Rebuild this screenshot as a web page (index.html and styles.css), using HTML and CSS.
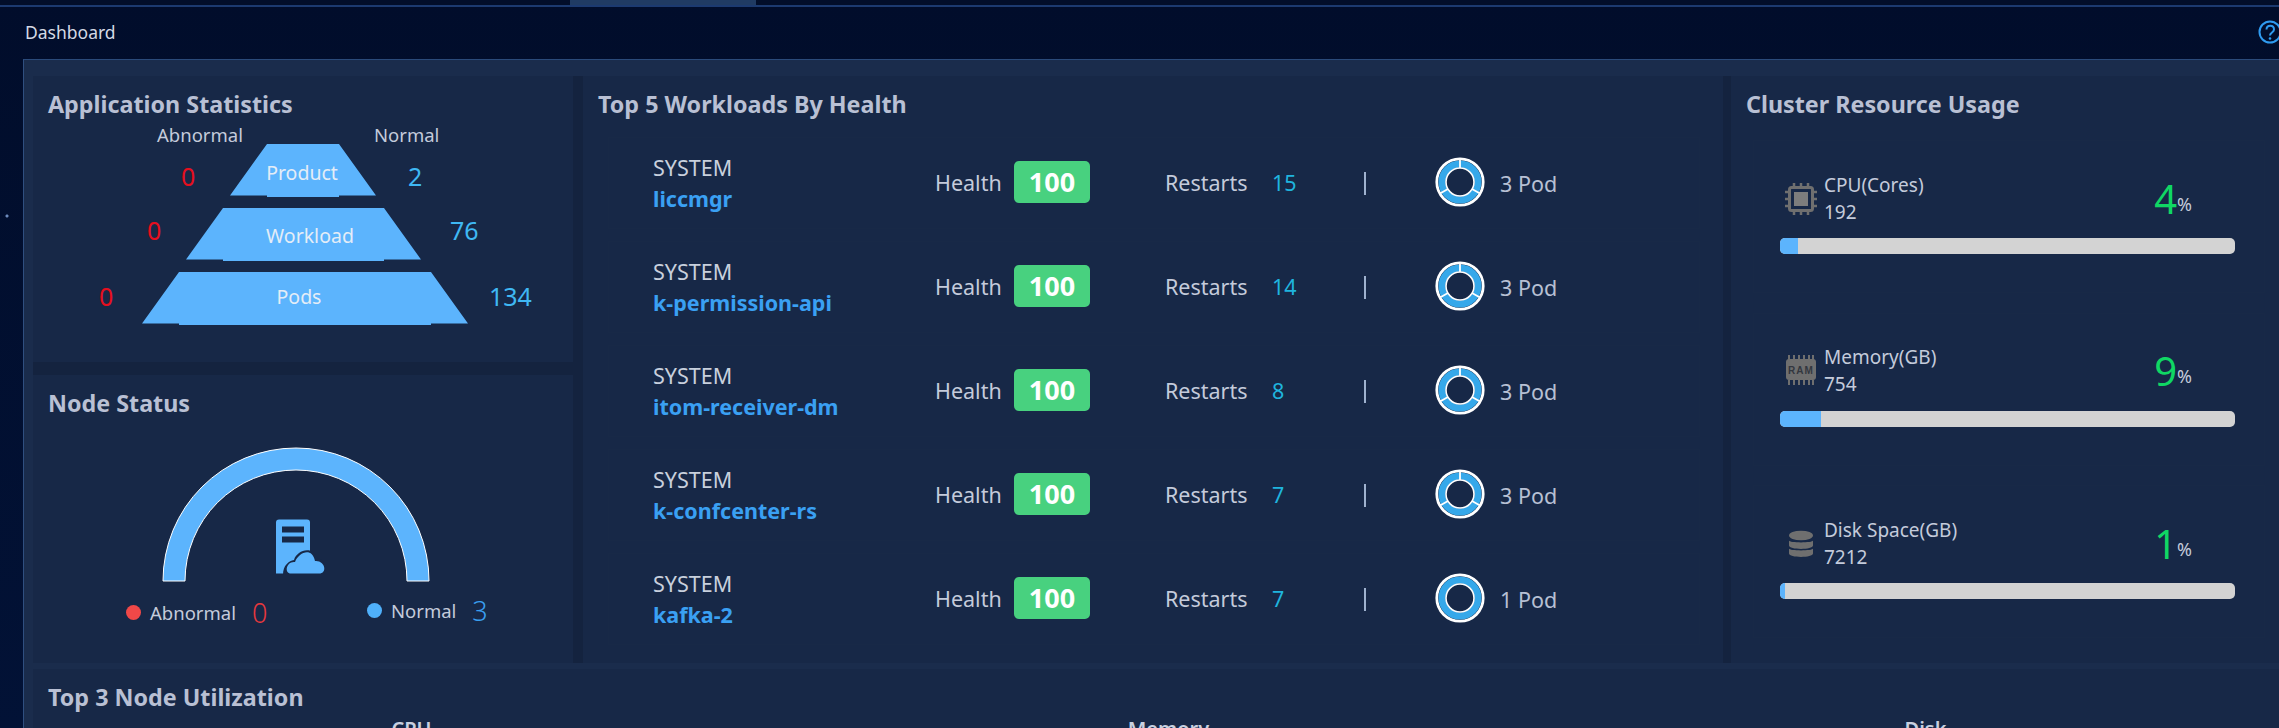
FILE: index.html
```html
<!DOCTYPE html>
<html lang="en">
<head>
    <meta charset="UTF-8">
    <title>Dashboard</title>
    <link rel="stylesheet" href="styles.css">
</head>
<body>
    <svg class="defs" width="0" height="0">
        <symbol id="pod-ring" viewBox="0 0 50 50">
            <circle cx="25" cy="25" r="23.2" fill="none" stroke="#fff" stroke-width="2.8"/>
            <circle cx="25" cy="25" r="18" fill="none" stroke="#35a8ea" stroke-width="7"/>
            <circle cx="25" cy="25" r="14" fill="none" stroke="#fff" stroke-width="1.6"/>
        </symbol>
        <symbol id="pod-ring-3" viewBox="0 0 50 50">
            <use href="#pod-ring" width="50" height="50"/>
            <path d="M25 2V11M5 36.500L13 32M45 36.500L37 32" stroke="#fff" stroke-width="1.800" fill="none"/>
        </symbol>
    </svg>

    <div class="topbar"><div class="topbar-tab"></div></div>
    <div class="page-head">
        <span class="page-title">Dashboard</span>
        <svg class="help-icon" width="24" height="24" viewBox="0 0 24 24">
            <circle cx="12" cy="12" r="10.500" fill="none" stroke="#2f9bf0" stroke-width="2"/>
            <path d="M8.500 9.500C8.500 4.500 16 4.500 16 9.500C16 12.500 12 12.500 12 15.500" fill="none" stroke="#2f9bf0" stroke-width="2"/>
            <circle cx="12" cy="18.500" r="1.300" fill="#2f9bf0"/>
        </svg>
    </div>

    <div class="main">
        <div class="upper">
            <div class="left-col">
                <section class="card card-app">
                    <h2 class="card-title">Application Statistics</h2>
                    <div class="pyr-labels"><span>Abnormal</span><span>Normal</span></div>
                    <div class="pyr-row pyr-product">
                        <span class="num-bad">0</span>
                        <div class="trap">Product</div>
                        <span class="num-ok">2</span>
                    </div>
                    <div class="pyr-row pyr-workload">
                        <span class="num-bad">0</span>
                        <div class="trap">Workload</div>
                        <span class="num-ok">76</span>
                    </div>
                    <div class="pyr-row pyr-pods">
                        <span class="num-bad">0</span>
                        <div class="trap">Pods</div>
                        <span class="num-ok">134</span>
                    </div>
                </section>

                <section class="card card-node">
                    <h2 class="card-title">Node Status</h2>
                    <div class="gauge">
                        <svg width="268" height="135" viewBox="0 0 268 135">
                            <path d="M1 134A133 133 0 0 1 267 134L245 134A111 111 0 0 0 23 134Z" fill="#5cb4fd" stroke="#fff" stroke-width="1"/>
                            <path d="M114 75.500a3 3 0 0 1 3-3H145a3 3 0 0 1 3 3V126.500H114Z" fill="#5cb4fd"/>
                            <path d="M120 79.500H142V85.500H120ZM120 89.500H142V95.500H120Z" fill="#172847"/>
                            <path d="M121 128C121 118 127 114 132 113C135 103 151 98 156 112C164 110 165 128 156 128Z" fill="#172847"/>
                            <path d="M129 126.500C122 126.500 124 114 133 115C137 105 150 100 153 114C163 113 166 126.500 157 126.500Z" fill="#5cb4fd"/>
                        </svg>
                    </div>
                    <div class="node-legend">
                        <div class="legend-item legend-bad">
                            <i class="dot dot-red"></i><span>Abnormal</span><b class="legend-num">0</b>
                        </div>
                        <div class="legend-item legend-ok">
                            <i class="dot dot-blue"></i><span>Normal</span><b class="legend-num">3</b>
                        </div>
                    </div>
                </section>
            </div>

            <section class="card card-workloads">
                <h2 class="card-title">Top 5 Workloads By Health</h2>
                <div class="wl-list">
                    <div class="wl-row">
                        <div class="wl-name"><span>SYSTEM</span><a>liccmgr</a></div>
                        <span class="wl-label">Health</span><span class="badge">100</span>
                        <span class="wl-restarts">Restarts</span><span class="wl-count">15</span>
                        <span class="wl-sep"></span>
                        <svg class="pod-icon" width="50" height="50"><use href="#pod-ring-3"/></svg>
                        <span class="wl-pods">3 Pod</span>
                    </div>
                    <div class="wl-row">
                        <div class="wl-name"><span>SYSTEM</span><a>k-permission-api</a></div>
                        <span class="wl-label">Health</span><span class="badge">100</span>
                        <span class="wl-restarts">Restarts</span><span class="wl-count">14</span>
                        <span class="wl-sep"></span>
                        <svg class="pod-icon" width="50" height="50"><use href="#pod-ring-3"/></svg>
                        <span class="wl-pods">3 Pod</span>
                    </div>
                    <div class="wl-row">
                        <div class="wl-name"><span>SYSTEM</span><a>itom-receiver-dm</a></div>
                        <span class="wl-label">Health</span><span class="badge">100</span>
                        <span class="wl-restarts">Restarts</span><span class="wl-count">8</span>
                        <span class="wl-sep"></span>
                        <svg class="pod-icon" width="50" height="50"><use href="#pod-ring-3"/></svg>
                        <span class="wl-pods">3 Pod</span>
                    </div>
                    <div class="wl-row">
                        <div class="wl-name"><span>SYSTEM</span><a>k-confcenter-rs</a></div>
                        <span class="wl-label">Health</span><span class="badge">100</span>
                        <span class="wl-restarts">Restarts</span><span class="wl-count">7</span>
                        <span class="wl-sep"></span>
                        <svg class="pod-icon" width="50" height="50"><use href="#pod-ring-3"/></svg>
                        <span class="wl-pods">3 Pod</span>
                    </div>
                    <div class="wl-row">
                        <div class="wl-name"><span>SYSTEM</span><a>kafka-2</a></div>
                        <span class="wl-label">Health</span><span class="badge">100</span>
                        <span class="wl-restarts">Restarts</span><span class="wl-count">7</span>
                        <span class="wl-sep"></span>
                        <svg class="pod-icon" width="50" height="50"><use href="#pod-ring"/></svg>
                        <span class="wl-pods">1 Pod</span>
                    </div>
                </div>
            </section>

            <section class="card card-usage">
                <h2 class="card-title">Cluster Resource Usage</h2>
                <div class="res-block">
                    <div class="res-head">
                        <svg class="res-icon" width="32" height="32" viewBox="0 0 32 32">
                            <rect x="4.500" y="4.500" width="23" height="23" rx="2" fill="none" stroke="#6f6f6f" stroke-width="3"/>
                            <rect x="9" y="9" width="14" height="14" fill="#7d7d7d"/>
                            <path d="M9 0V3M16 0V3M23 0V3M9 29V32M16 29V32M23 29V32M0 9H3M0 16H3M0 23H3M29 9H32M29 16H32M29 23H32" stroke="#6f6f6f" stroke-width="2.500"/>
                        </svg>
                        <div class="res-text"><span>CPU(Cores)</span><span>192</span></div>
                        <div class="res-pct"><b>4</b>%</div>
                    </div>
                    <div class="bar"><div class="bar-fill" style="width: 4%"></div></div>
                </div>
                <div class="res-block">
                    <div class="res-head">
                        <svg class="res-icon" width="32" height="32" viewBox="0 0 32 32">
                            <path d="M4 0V5M9 0V5M14 0V5M19 0V5M24 0V5M28 0V5M4 25V30M9 25V30M14 25V30M19 25V30M24 25V30M28 25V30" stroke="#6f6f6f" stroke-width="2"/>
                            <rect x="1" y="4" width="30" height="21" rx="3" fill="#6f6f6f"/>
                            <text x="16" y="19" class="ram-text">RAM</text>
                        </svg>
                        <div class="res-text"><span>Memory(GB)</span><span>754</span></div>
                        <div class="res-pct"><b>9</b>%</div>
                    </div>
                    <div class="bar"><div class="bar-fill" style="width: 9%"></div></div>
                </div>
                <div class="res-block">
                    <div class="res-head">
                        <svg class="res-icon" width="32" height="32" viewBox="0 0 32 32">
                            <path d="M4 20.500C4 23 28 23 28 20.500V25.500C28 30 4 30 4 25.500Z" fill="#6f6f6f"/>
                            <path d="M4 12.500C4 15 28 15 28 12.500V17.500C28 22 4 22 4 17.500Z" fill="#6f6f6f"/>
                            <ellipse cx="16" cy="7.500" rx="12" ry="4.800" fill="#6f6f6f"/>
                        </svg>
                        <div class="res-text"><span>Disk Space(GB)</span><span>7212</span></div>
                        <div class="res-pct"><b>1</b>%</div>
                    </div>
                    <div class="bar"><div class="bar-fill" style="width: 1%"></div></div>
                </div>
            </section>
        </div>

        <section class="card card-util">
            <h2 class="card-title">Top 3 Node Utilization</h2>
            <div class="util-cols">
                <span>CPU</span>
                <span>Memory</span>
                <span>Disk</span>
            </div>
        </section>
    </div>
</body>
</html>
```

FILE: styles.css
```css
html, body {
    margin: 0;
    padding: 0;
    height: 728px;
    overflow: hidden;
}
body {
    font-family: "Noto Sans", "Open Sans", sans-serif;
    color: #c4cbdb;
    background-color: #021031;
    background-image:
        radial-gradient(circle at 7px 216px, #6d8bbd 1px, transparent 2px),
        linear-gradient(180deg, #010d2b, #021236);
}
.defs {
    display: block;
    height: 0;
}
.topbar {
    height: 5px;
    background: #020e2a;
    border-bottom: 2px solid #1c3a70;
}
.topbar-tab {
    width: 186px;
    height: 5px;
    margin-left: 570px;
    background: #203b63;
}
.page-head {
    display: flex;
    align-items: center;
    justify-content: space-between;
    height: 52px;
    padding-left: 25px;
    padding-right: 0;
    margin-right: -3px;
}
.page-title {
    font-size: 17.500px;
    color: #d4d9e4;
    position: relative;
    top: -1px;
}
.help-icon {
    flex: none;
    position: relative;
    top: -1px;
}

.main {
    width: 2281px;
    margin-left: 23px;
    padding: 16px 0 0 10px;
    background: #1a2c4c;
    border-top: 1px solid #2a4a7a;
    border-left: 1px solid #2f4f80;
    box-sizing: border-box;
    height: 669px;
    margin-top: 0;
}
.upper {
    display: flex;
    height: 587px;
    margin-left: -1px;
    background: #14233f;
}
.left-col {
    display: flex;
    flex-direction: column;
    gap: 13px;
    width: 540px;
    flex: none;
}
.card {
    background: #172847;
    box-sizing: border-box;
}
.card-title {
    margin: 0;
    padding: 14px 0 0 15px;
    font-size: 23.300px;
    line-height: 28px;
    font-weight: 700;
    color: #b9c0d4;
}

/* Application Statistics */
.card-app {
    height: 286px;
}
.pyr-labels {
    display: flex;
    height: 18px;
    margin: 8px 0 1px 124px;
    font-size: 18.500px;
    line-height: 18px;
}
.pyr-labels span:first-child {
    width: 217px;
}
.pyr-row {
    display: flex;
    align-items: flex-start;
    height: 53px;
    margin-top: 11px;
}
.pyr-product {
    margin-top: -1px;
    padding-left: 148px;
}
.pyr-workload {
    padding-left: 114px;
}
.pyr-pods {
    padding-left: 66px;
}
.num-bad, .num-ok {
    font-size: 25px;
    line-height: 30px;
}
.num-bad {
    color: #e60f1e;
}
.num-ok {
    color: #3fb8f4;
}
.trap {
    box-sizing: border-box;
    height: 53px;
    background: #5cb4fd;
    color: #e4edf7;
    font-size: 19.500px;
    line-height: 24px;
    text-align: center;
    clip-path: polygon(37px 0, calc(100% - 37px) 0, 100% 51.500px, calc(100% - 37px) 51.500px, calc(100% - 37px) 53px, 37px 53px, 37px 51.500px, 0 51.500px);
}
.pyr-product .num-bad { width: 49px; margin-top: 17px; }
.pyr-product .num-ok { margin: 17px 0 0 32px; }
.pyr-product .trap { width: 146px; padding: 17px 2px 0 0; }
.pyr-workload .num-bad { width: 39px; margin-top: 7px; }
.pyr-workload .num-ok { margin: 7px 0 0 29px; }
.pyr-workload .trap { width: 235px; padding: 16px 0 0 13px; }
.pyr-pods .num-bad { width: 43px; margin-top: 9px; }
.pyr-pods .num-ok { margin: 9px 0 0 21px; }
.pyr-pods .trap { width: 326px; padding: 13px 12px 0 0; }

/* Node Status */
.card-node {
    height: 288px;
}
.gauge {
    height: 135px;
    margin: 30px 0 0 129px;
}
.node-legend {
    display: flex;
    margin-top: 15px;
    padding-left: 93px;
}
.legend-item {
    display: flex;
    align-items: center;
    font-size: 18.500px;
    height: 30px;
}
.legend-bad {
    width: 241px;
}
.legend-ok {
    margin-top: -2px;
}
.dot {
    width: 15px;
    height: 15px;
    border-radius: 50%;
    margin-right: 9px;
}
.dot-red { background: #f04848; }
.dot-blue { background: #4fb0fa; }
.legend-num {
    font-size: 27px;
    font-weight: 300;
    margin-left: 16px;
}
.legend-bad .legend-num { color: #e8383d; }
.legend-ok .legend-num { color: #3a9ff0; }

/* Top 5 Workloads */
.card-workloads {
    width: 1140px;
    flex: none;
    margin-left: 10px;
    padding-left: 0;
}
.wl-list {
    margin: 19px 0 0 25px;
}
.wl-row {
    display: flex;
    align-items: center;
    box-sizing: border-box;
    width: 1092px;
    height: 92px;
    margin-bottom: 12px;
    padding-left: 44px;
    border: 1px solid #182947;
    font-size: 21.500px;
}
.wl-name {
    display: flex;
    flex-direction: column;
    width: 282px;
    line-height: 31px;
    color: #c8d0dd;
    margin-top: -1px;
}
.wl-name a {
    color: #3aa0f3;
    font-weight: 700;
}
.wl-label {
    width: 79px;
    margin-top: -2px;
}
.badge {
    box-sizing: border-box;
    width: 76px;
    height: 42px;
    margin-top: -3px;
    border-radius: 5px;
    background: #48d17f;
    color: #fff;
    font-size: 27px;
    line-height: 41px;
    font-weight: 700;
    text-align: center;
}
.wl-restarts {
    width: 107px;
    margin: -2px 0 0 75px;
}
.wl-count {
    width: 92px;
    margin-top: -2px;
    color: #1fb4de;
}
.wl-sep {
    width: 2px;
    height: 23px;
    margin-right: 69px;
    background: #9fb2cf;
}
.pod-icon {
    flex: none;
    margin-top: -2px;
}
.wl-pods {
    margin-left: 15px;
    color: #b7c0d4;
}

/* Cluster Resource Usage */
.card-usage {
    flex: 1;
    margin-left: 8px;
}
.res-block {
    box-sizing: border-box;
    width: 512px;
    height: 153px;
    margin: 0 0 19.500px 22px;
    padding: 31px 29px 0 26px;
    border: 1px solid #182947;
}
.res-block:first-of-type {
    margin-top: 22px;
}
.res-head {
    display: flex;
    align-items: center;
    height: 53px;
    padding-left: 5px;
    margin-bottom: 13px;
}
.res-icon {
    flex: none;
    margin-right: 7px;
}
.ram-text {
    font-family: "Liberation Sans", sans-serif;
    font-size: 10px;
    font-weight: 700;
    letter-spacing: 1px;
    text-anchor: middle;
    fill: #33373f;
}
.res-text {
    display: flex;
    flex-direction: column;
    font-size: 19px;
    line-height: 27px;
}
.res-pct {
    margin: 5px 43px 0 auto;
    font-size: 18px;
    line-height: 50px;
}
.res-pct b {
    font-size: 40px;
    font-weight: 400;
    color: #10d764;
    vertical-align: -3px;
}
.bar {
    height: 16px;
    border-radius: 5px;
    overflow: hidden;
    background: #d3d3d3;
}
.bar-fill {
    height: 100%;
    background: #5cb4fd;
}

/* Top 3 Node Utilization */
.card-util {
    height: 70px;
    margin: 6px 0 0 -1px;
}
.util-cols {
    display: grid;
    grid-template-columns: repeat(3, 757px);
    margin-top: 5px;
    text-align: center;
    font-size: 20px;
    font-weight: 600;
    line-height: 26px;
    color: #c8d0e0;
}
```
